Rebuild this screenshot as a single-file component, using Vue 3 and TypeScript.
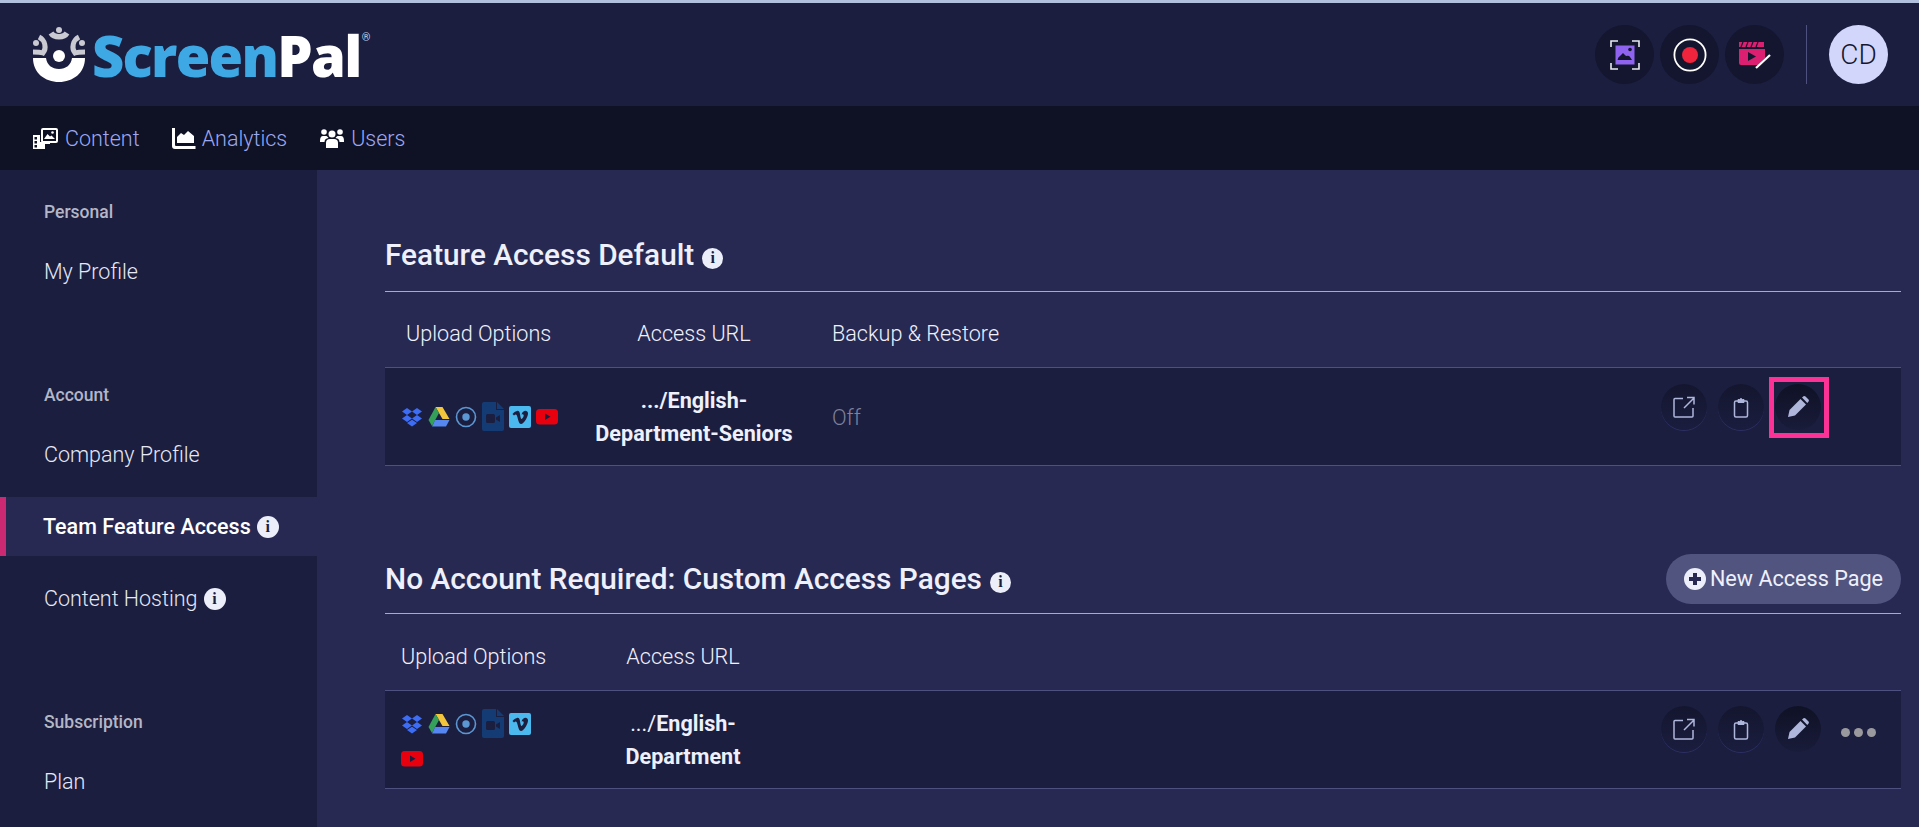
<script setup lang="ts">
const sections = [
  { label: 'Personal', items: [{ name: 'My Profile' }] },
  { label: 'Account', items: [{ name: 'Company Profile' }, { name: 'Team Feature Access', info: true, active: true }, { name: 'Content Hosting', info: true }] },
  { label: 'Subscription', items: [{ name: 'Plan' }] },
]
</script>

<template>
  <div class="page">
    <header class="top">
      <div class="logo">
        <svg class="logo-mark" width="56" height="58" viewBox="30 26 56 56">
          <path d="M32 57H45C46 64 51 68 58 68S70 64 71 57H84C84 72 72 81 58 81S32 72 32 57Z" fill="#fff"/>
          <circle cx="58" cy="55" r="6" fill="#fff"/>
          <g fill="none" stroke="#c9cad2" stroke-width="5.5">
            <path d="M50 32C53 37 63 37 66 32"/>
            <path d="M38 36C44 39 46 47 42 52C39 51 35 51 32 51" stroke-width="5"/>
            <path d="M78 36C72 39 70 47 74 52C77 51 81 51 84 51" stroke-width="5"/>
          </g>
          <g fill="#c9cad2"><circle cx="58" cy="29" r="3"/><circle cx="35" cy="42" r="3"/><circle cx="81" cy="42" r="3"/></g>
        </svg>
        <span class="logo-text"><b class="blue">Screen</b><b class="white">Pal</b></span><sup class="reg">®</sup>
      </div>
      <div class="top-right">
        <span class="round">
          <svg width="30" height="30" viewBox="0 0 30 30">
            <rect x="5.5" y="5.5" width="19" height="19" fill="#8f62f0"/>
            <path d="M7.500 20Q8 17 10 16L13 13L16 16Q19 15 20 17L22 20Z" fill="#14162f"/><circle cx="20" cy="9.500" r="1.800" fill="#14162f"/>
            <path d="M1 7V1H8M22 1H29V7M29 23V29H22M8 29H1V23" fill="none" stroke="#e8e9f2" stroke-width="1.600"/>
          </svg>
        </span>
        <span class="round">
          <svg width="34" height="34" viewBox="0 0 34 34"><circle cx="17" cy="17" r="15.600" fill="none" stroke="#fff" stroke-width="1.800"/><circle cx="17" cy="17" r="8" fill="#f0243c"/></svg>
        </span>
        <span class="round">
          <svg width="34" height="30" viewBox="0 0 34 30">
            <path d="M1 2H26V7H1Z" fill="#dc1f71"/>
            <path d="M5 2l-2 5M10 2l-2 5M15 2l-2 5M20 2l-2 5" stroke="#14162f" stroke-width="1.200"/>
            <path d="M1 9H27V18L20 25H3A2 2 0 0 1 1 23Z" fill="#dc1f71"/>
            <path d="M10 12V21L18 16.500Z" fill="#14162f"/>
            <path d="M18 28L32 15" stroke="#fff" stroke-width="2.200"/>
          </svg>
        </span>
        <span class="divider"></span>
        <span class="avatar">CD</span>
      </div>
    </header>

    <nav class="nav">
      <a class="nav-item">
        <svg width="25" height="21" viewBox="0 0 25 21">
          <rect x="9" y="1" width="15" height="13" rx="1" fill="#0f1125" stroke="#fff" stroke-width="2"/>
          <path d="M11 11L14.500 6L17 8.500L18.500 7.500L22 11Z" fill="#fff"/><circle cx="19.500" cy="4.500" r="1.300" fill="#fff"/>
          <path d="M0 7H7V14H17V16H12V21H0Z" fill="#fff"/>
          <g fill="#0f1125"><rect x="1.500" y="9" width="2.500" height="2.500"/><rect x="1.500" y="13" width="2.500" height="2.500"/><rect x="1.500" y="17" width="2.500" height="2.500"/></g>
        </svg>
        <span>Content</span>
      </a>
      <a class="nav-item">
        <svg width="24" height="21" viewBox="0 0 24 21" fill="#fff">
          <path d="M0 0H3V17A1 1 0 0 0 4 18H23.500V21H3A3 3 0 0 1 0 18Z"/>
          <path d="M5 15V9L9 5L12 7L16 3L22 8V15Z"/>
        </svg>
        <span>Analytics</span>
      </a>
      <a class="nav-item">
        <svg width="24" height="20" viewBox="0 0 24 20" fill="#fff">
          <circle cx="12" cy="6" r="3.500"/><circle cx="4" cy="4" r="2.800"/><circle cx="20" cy="4" r="2.800"/>
          <path d="M6 20V15Q6 11 10 11H14Q18 11 18 15V20Z"/>
          <path d="M0 13Q0 8 3 8H6.500Q8 9 8.500 10Q4.500 10.500 4.500 14H0ZM24 13Q24 8 21 8H17.500Q16 9 15.500 10Q19.500 10.500 19.500 14H24Z"/>
        </svg>
        <span>Users</span>
      </a>
    </nav>

    <div class="body">
      <aside class="side">
        <section v-for="s in sections" :key="s.label" class="side-group">
          <h4 class="side-label">{{ s.label }}</h4>
          <a v-for="i in s.items" :key="i.name" class="side-item" :class="{ active: i.active }">
            <span>{{ i.name }}</span>
            <span v-if="i.info" class="info big">i</span>
          </a>
        </section>
      </aside>

      <main class="main">
        <section class="block first">
          <div class="head">
            <h2>Feature Access Default<span class="info">i</span></h2>
          </div>
          <div class="cols one">
            <span class="up">Upload Options</span><span class="url">Access URL</span><span class="bk">Backup &amp; Restore</span>
          </div>
          <div class="row one">
            <div class="icons wide">
              <svg class="ic" viewBox="0 0 22 20" fill="#3d6cf5"><path d="M6 1L1 4.500L6 8L11 4.500ZM16 1L11 4.500L16 8L21 4.500ZM1 11.500L6 15L11 11.500L6 8ZM21 11.500L16 15L11 11.500L16 8ZM6 16L11 19.500L16 16L11 12.800Z"/></svg>
              <svg class="ic" viewBox="0 0 22 20"><path d="M7.500 0H14.500L21.500 12H14.500Z" fill="#f2c53c"/><path d="M7.500 0L11 6L4 19L0.500 13Z" fill="#34a05a"/><path d="M7 13H21.500L18 19.500H4Z" fill="#5686f0"/></svg>
              <svg class="ic" viewBox="0 0 22 22"><circle cx="11" cy="11" r="9.500" fill="none" stroke="#5b97d3" stroke-width="1.600"/><circle cx="11" cy="11" r="3.700" fill="#5b97d3"/></svg>
              <svg class="ic tall" viewBox="0 0 22 29"><path d="M2 0H14V8H22V27A2 2 0 0 1 20 29H2A2 2 0 0 1 0 27V2A2 2 0 0 1 2 0Z" fill="#153b75"/><path d="M15 0L22 7H15Z" fill="#153b75"/><rect x="4" y="12" width="9" height="9" rx="1.500" fill="#1b1e3f"/><path d="M14 15.500L18 13V20L14 17.500Z" fill="#1b1e3f"/></svg>
              <svg class="ic" viewBox="0 0 22 22"><rect width="22" height="22" rx="2" fill="#4cb9ee"/><path d="M3.500 8L5 9.500C7 7.500 7.800 8.500 8.500 11.500C9.500 15 10 18 12 18C15 18 19 11 19 7.500C19 4 14 3.500 12.500 8.500C14.500 7.500 15.500 9 14 11.500C12.800 13.500 12 13.500 11.500 11C11 8 10.800 4.500 8.500 4.800C7 5 5 6.500 3.500 8Z" fill="#1b1e3f"/></svg>
              <svg class="ic" viewBox="0 0 22 16"><rect width="22" height="15.500" rx="3.500" fill="#e8000e"/><path d="M9 4.500V11L14.500 7.800Z" fill="#1b1e3f"/></svg>
            </div>
            <div class="link"><b>.../English-<br>Department-Seniors</b></div>
            <div class="off">Off</div>
            <div class="acts">
              <button class="btn">
                <svg width="22" height="22" viewBox="0 0 22 22" fill="none" stroke="#aeb6dc" stroke-width="1.500"><path d="M10 2.500H2A1 1 0 0 0 1 3.500V20A1 1 0 0 0 2 21H19A1 1 0 0 0 20 20V12"/><path d="M11 12L21 2M14 1.500H21V8.500"/></svg>
              </button>
              <button class="btn">
                <svg width="16" height="21" viewBox="0 0 16 21" fill="none" stroke="#aeb6dc" stroke-width="1.500"><rect x="1.500" y="4" width="13" height="16" rx="1.500"/><path d="M5 4V2.500H6.700A1.400 1.400 0 0 1 9.300 2.500H11V5.500H5Z" fill="#aeb6dc" stroke-width="1"/></svg>
              </button>
              <div class="pen-wrap">
                <button class="btn dark">
                  <svg width="22" height="22" viewBox="0 0 22 22" fill="#aeb6dc"><path d="M1 21L2.500 14L13.500 3L19 8.500L8 19.500Z"/><path d="M15 1.500L16.500 0.300Q17.500-.3 18.500.5L21.500 3.500Q22.300 4.500 21.500 5.500L20.300 7Z"/></svg>
                </button>
                <span class="pink"></span>
              </div>
            </div>
          </div>
        </section>

        <section class="block second">
          <div class="head">
            <h2>No Account Required: Custom Access Pages<span class="info">i</span></h2>
            <button class="new"><span class="plus"></span>New Access Page</button>
          </div>
          <div class="cols two">
            <span class="up">Upload Options</span><span class="url">Access URL</span>
          </div>
          <div class="row two">
            <div class="icons">
              <svg class="ic" viewBox="0 0 22 20" fill="#3d6cf5"><path d="M6 1L1 4.500L6 8L11 4.500ZM16 1L11 4.500L16 8L21 4.500ZM1 11.500L6 15L11 11.500L6 8ZM21 11.500L16 15L11 11.500L16 8ZM6 16L11 19.500L16 16L11 12.800Z"/></svg>
              <svg class="ic" viewBox="0 0 22 20"><path d="M7.500 0H14.500L21.500 12H14.500Z" fill="#f2c53c"/><path d="M7.500 0L11 6L4 19L0.500 13Z" fill="#34a05a"/><path d="M7 13H21.500L18 19.500H4Z" fill="#5686f0"/></svg>
              <svg class="ic" viewBox="0 0 22 22"><circle cx="11" cy="11" r="9.500" fill="none" stroke="#5b97d3" stroke-width="1.600"/><circle cx="11" cy="11" r="3.700" fill="#5b97d3"/></svg>
              <svg class="ic tall" viewBox="0 0 22 29"><path d="M2 0H14V8H22V27A2 2 0 0 1 20 29H2A2 2 0 0 1 0 27V2A2 2 0 0 1 2 0Z" fill="#153b75"/><path d="M15 0L22 7H15Z" fill="#153b75"/><rect x="4" y="12" width="9" height="9" rx="1.500" fill="#1b1e3f"/><path d="M14 15.500L18 13V20L14 17.500Z" fill="#1b1e3f"/></svg>
              <svg class="ic" viewBox="0 0 22 22"><rect width="22" height="22" rx="2" fill="#4cb9ee"/><path d="M3.500 8L5 9.500C7 7.500 7.800 8.500 8.500 11.500C9.500 15 10 18 12 18C15 18 19 11 19 7.500C19 4 14 3.500 12.500 8.500C14.500 7.500 15.500 9 14 11.500C12.800 13.500 12 13.500 11.500 11C11 8 10.800 4.500 8.500 4.800C7 5 5 6.500 3.500 8Z" fill="#1b1e3f"/></svg>
              <svg class="ic" viewBox="0 0 22 16"><rect width="22" height="15.500" rx="3.500" fill="#e8000e"/><path d="M9 4.500V11L14.500 7.800Z" fill="#1b1e3f"/></svg>
            </div>
            <div class="link"><span class="reg-w">.../</span><b>English-<br>Department</b></div>
            <div class="acts">
              <button class="btn">
                <svg width="22" height="22" viewBox="0 0 22 22" fill="none" stroke="#aeb6dc" stroke-width="1.500"><path d="M10 2.500H2A1 1 0 0 0 1 3.500V20A1 1 0 0 0 2 21H19A1 1 0 0 0 20 20V12"/><path d="M11 12L21 2M14 1.500H21V8.500"/></svg>
              </button>
              <button class="btn">
                <svg width="16" height="21" viewBox="0 0 16 21" fill="none" stroke="#aeb6dc" stroke-width="1.500"><rect x="1.500" y="4" width="13" height="16" rx="1.500"/><path d="M5 4V2.500H6.700A1.400 1.400 0 0 1 9.300 2.500H11V5.500H5Z" fill="#aeb6dc" stroke-width="1"/></svg>
              </button>
              <button class="btn dark">
                <svg width="22" height="22" viewBox="0 0 22 22" fill="#aeb6dc"><path d="M1 21L2.500 14L13.500 3L19 8.500L8 19.500Z"/><path d="M15 1.500L16.500 0.300Q17.500-.3 18.500.5L21.500 3.500Q22.300 4.500 21.500 5.500L20.300 7Z"/></svg>
              </button>
              <span class="dots"><i></i><i></i><i></i></span>
            </div>
          </div>
        </section>
      </main>
    </div>
  </div>
</template>

<style>
html, body { margin: 0; background: #272953; overflow: hidden; }
</style>

<style scoped>
.page { width: 1919px; height: 827px; overflow: hidden; font-family: Roboto, "Liberation Sans", sans-serif; color: #e8eaf8; display: flex; flex-direction: column; }
.top { height: 103px; flex: none; border-top: 3px solid #b0c0dd; background: #1b1e3f; display: flex; align-items: center; justify-content: space-between; padding: 0 31px 0 31px; box-sizing: content-box; }
.logo { display: flex; align-items: center; position: relative; }
.logo-mark { margin-right: 5px; }
.logo-text { font-family: "Open Sans", sans-serif; font-size: 56px; letter-spacing: -1.700px; line-height: 60px; }
.logo-text b { font-weight: 800; }
.blue { color: #3ea8e5; }
.white { color: #fff; }
.reg { font-size: 11px; color: #cfd0da; font-family: Roboto, sans-serif; align-self: flex-start; margin: 6px 0 0 1px; }
.top-right { display: flex; align-items: center; }
.round { width: 59px; height: 59px; border-radius: 50%; background: #14162f; display: flex; align-items: center; justify-content: center; margin-right: 6px; }
.divider { width: 1px; height: 59px; background: #4e517f; margin: 0 22px 0 16px; }
.avatar { width: 59px; height: 59px; border-radius: 50%; background: #d3d6fb; color: #15172f; font-size: 28px; font-weight: 300; display: flex; align-items: center; justify-content: center; }

.nav { height: 64px; flex: none; background: #0f1125; display: flex; align-items: center; padding-left: 33px; }
.nav-item { display: flex; align-items: center; gap: 7px; margin-right: 32px; font-size: 21.500px; font-weight: 300; color: #9ba8f2; }
.nav-item:nth-child(2) { gap: 6px; margin-right: 33px; }

.body { flex: 1; display: flex; min-height: 0; }
.side { width: 317px; flex: none; background: #1b1e3f; padding-top: 23px; box-sizing: border-box; }
.side-group { margin-bottom: 75px; }
.side-label { margin: 0 0 11px; padding-left: 44px; height: 38px; line-height: 38px; font-size: 17.500px; font-weight: 500; color: #b4b6c8; }
.side-item { height: 59px; margin-bottom: 13px; padding-left: 44px; display: flex; align-items: center; gap: 6px; font-size: 21.500px; font-weight: 300; color: #e6e8f5; }
.side-item.active { background: #272953; font-weight: 500; color: #fff; box-shadow: inset 6px 0 0 #cc2973; padding-left: 43px; }

.info { display: inline-flex; width: 21px; height: 21px; border-radius: 50%; background: #eceef9; color: #1b1e3f; font-family: "Liberation Serif", serif; font-weight: 700; font-size: 16px; align-items: center; justify-content: center; vertical-align: 2px; }
h2 .info { margin-left: 8px; }
.info.big { width: 22px; height: 22px; }

.main { flex: 1; padding: 0 18px 0 68px; min-width: 0; }
.block.first { padding-top: 48px; }
.block.second { padding-top: 78px; }
.head { height: 74px; display: flex; align-items: center; justify-content: space-between; border-bottom: 1px solid #a9abc0; box-sizing: border-box; }
.block.second .head { height: 70px; }
h2 { margin: 0; font-size: 29.800px; font-weight: 500; color: #eef0fb; }

.cols { display: grid; align-items: center; font-size: 21.600px; font-weight: 300; color: #f0f1fb; border-bottom: 1px solid #4e517f; box-sizing: border-box; }
.cols.one { grid-template-columns: 209px 200px 1fr; height: 76px; padding-top: 7px; }
.cols.two { grid-template-columns: 198px 200px 1fr; height: 77px; padding-top: 9px; }
.cols.one .up { padding-left: 21px; }
.cols.two .up { padding-left: 16px; }
.url { text-align: center; }
.bk { padding-left: 38px; }

.row { display: grid; height: 98px; background: #1b1e3f; border-bottom: 1px solid #4e517f; box-sizing: border-box; align-items: center; }
.row.one { grid-template-columns: 209px 200px 200px 1fr; }
.row.two { grid-template-columns: 198px 200px 1fr; }
.icons { display: flex; flex-wrap: wrap; align-items: center; column-gap: 5px; row-gap: 10px; padding-left: 16px; width: 140px; }
.icons.wide { width: 180px; }
.ic { width: 22px; height: 22px; flex: none; }
.ic.tall { height: 29px; }
.link { text-align: center; font-size: 21.600px; line-height: 33px; color: #eef0fb; }
.link b { font-weight: 700; }
.reg-w { font-weight: 400; }
.off { padding: 2px 0 0 38px; font-size: 21.600px; font-weight: 300; color: #7f819b; }
.acts { display: flex; align-self: start; align-items: center; justify-content: flex-end; gap: 11px; padding-top: 16px; }
.row.one .acts { padding-right: 80px; }
.row.two .acts { padding-right: 25px; padding-top: 15px; }
.btn { width: 46px; height: 46px; border-radius: 50%; border: 0; padding: 0; background: linear-gradient(#14162f, #1a1d3e); box-shadow: 0 1px 0 #2e3064; display: flex; align-items: center; justify-content: center; }
.btn.dark { background: linear-gradient(#0f1125, #191c3a); box-shadow: none; }
.pen-wrap { position: relative; }
.pink { position: absolute; left: -6px; top: -7px; width: 60px; height: 61px; border: 5px solid #fd3297; box-sizing: border-box; pointer-events: none; }
.dots { display: flex; gap: 4px; margin-left: 9px; padding-top: 6px; }
.dots i { width: 9px; height: 9px; border-radius: 50%; background: #9a9a9e; }
.new { height: 50px; width: 235px; border: 0; border-radius: 25px; background: #51547f; color: #eef0fb; font-family: Roboto, sans-serif; font-size: 21.600px; display: flex; align-items: center; justify-content: center; gap: 4px; padding: 0; }
.plus { width: 22px; height: 22px; border-radius: 50%; background: #eceef9; position: relative; }
.plus::before, .plus::after { content: ""; position: absolute; background: #272953; }
.plus::before { left: 5px; right: 5px; top: 9px; height: 4px; }
.plus::after { top: 5px; bottom: 5px; left: 9px; width: 4px; }
</style>
